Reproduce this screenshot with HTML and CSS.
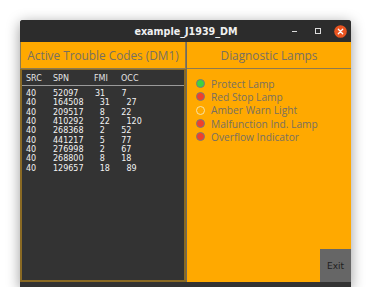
FILE: index.html
```html
<!DOCTYPE html>
<html>
<head>
<meta charset="utf-8">
<link rel="stylesheet" href="styles.css">
</head>
<body>
<div class="window">
  <div class="titlebar">
    <span class="title">example_J1939_DM</span>
    <div class="controls">
      <span class="ctl-min"></span>
      <span class="ctl-max"></span>
      <span class="ctl-close">
        <svg width="13" height="13" viewBox="0 0 13 13"><circle cx="6.5" cy="6.5" r="6.3" fill="#e95420"/><path d="M4.3 4.3 L8.7 8.7 M8.7 4.3 L4.3 8.7" stroke="#fff" stroke-width="1.3" stroke-linecap="round"/></svg>
      </span>
    </div>
  </div>
  <div class="content">
    <div class="left">
      <div class="hdr">Active Trouble Codes (DM1)</div>
      <div class="dtc">
        <div class="thead">
          <span class="c-src">SRC</span><span class="c-spn">SPN</span><span class="c-fmi">FMI</span><span>OCC</span>
        </div>
        <div class="tbody">
          <div class="row"><span class="c-src">40</span><span class="c-spn">52097</span><span class="c-fmi">31</span><span>7</span></div>
          <div class="row sh"><span class="c-src">40</span><span class="c-spn">164508</span><span class="c-fmi">31</span><span class="o2">27</span></div>
          <div class="row sh"><span class="c-src">40</span><span class="c-spn">209517</span><span class="c-fmi">8</span><span>22</span></div>
          <div class="row sh"><span class="c-src">40</span><span class="c-spn">410292</span><span class="c-fmi">22</span><span class="o2">120</span></div>
          <div class="row sh"><span class="c-src">40</span><span class="c-spn">268368</span><span class="c-fmi">2</span><span>52</span></div>
          <div class="row sh"><span class="c-src">40</span><span class="c-spn">441217</span><span class="c-fmi">5</span><span>77</span></div>
          <div class="row sh"><span class="c-src">40</span><span class="c-spn">276998</span><span class="c-fmi">2</span><span>67</span></div>
          <div class="row sh"><span class="c-src">40</span><span class="c-spn">268800</span><span class="c-fmi">8</span><span>18</span></div>
          <div class="row sh"><span class="c-src">40</span><span class="c-spn">129657</span><span class="c-fmi">18</span><span class="o2">89</span></div>
        </div>
      </div>
    </div>
    <div class="right">
      <div class="hdr">Diagnostic Lamps</div>
      <div class="lamps">
        <div class="lamp"><span class="dot green"></span>Protect Lamp</div>
        <div class="lamp"><span class="dot red"></span>Red Stop Lamp</div>
        <div class="lamp"><span class="dot off"></span>Amber Warn Light</div>
        <div class="lamp"><span class="dot red"></span>Malfunction Ind. Lamp</div>
        <div class="lamp"><span class="dot red"></span>Overflow Indicator</div>
      </div>
      <div class="bottom"><button class="exit">Exit</button></div>
    </div>
  </div>
  <div class="footer"></div>
</div>
</body>
</html>
```

FILE: styles.css
```css
html, body {
  margin: 0;
  padding: 0;
  background: #ffffff;
}
body {
  padding: 20px 0 0 20px;
}
.window {
  width: 331px;
  height: 267px;
  display: flex;
  flex-direction: column;
  background: #333333;
  box-shadow: 0 3px 14px rgba(0,0,0,0.4);
  border-radius: 3px 3px 0 0;
  overflow: hidden;
}
.titlebar {
  height: 22px;
  flex: none;
  background: #2c2c2c;
  display: flex;
  align-items: center;
  justify-content: center;
  position: relative;
}
.title {
  font-family: "DejaVu Sans", sans-serif;
  font-weight: bold;
  font-size: 9.6px;
  color: #f0f0f0;
  margin-left: 1px;
}
.controls {
  position: absolute;
  right: 4px;
  top: 0;
  height: 22px;
  display: flex;
  align-items: center;
}
.ctl-min {
  width: 5px;
  height: 1px;
  background: #dcdcdc;
  margin-right: 18px;
  margin-top: 1px;
}
.ctl-max {
  width: 4px;
  height: 4px;
  border: 1px solid #dcdcdc;
  margin-right: 13px;
}
.ctl-close {
  display: flex;
  width: 13px;
  height: 13px;
}
.content {
  flex: 1;
  display: flex;
  min-height: 0;
}
.left {
  width: 166px;
  display: flex;
  flex-direction: column;
  border-right: 1px solid #6e6a60;
}
.right {
  flex: 1;
  display: flex;
  flex-direction: column;
  background: #ffa900;
}
.hdr {
  height: 26px;
  flex: none;
  background: #ffa900;
  border-bottom: 1px solid #8c7a52;
  display: flex;
  align-items: center;
  justify-content: center;
  font-family: "Open Sans", sans-serif;
  font-size: 11.8px;
  color: #787060;
}
.left .hdr {
  border-left: 1px solid #8c7a52;
  border-right: 1px solid #8c7a52;
}
.dtc {
  flex: 1;
  background: #333333;
  border: 2px solid #8a6a24;
  border-top-width: 1px;
  font-family: "DejaVu Sans", sans-serif;
  font-size: 8px;
  color: #f2f2f2;
}
.thead {
  display: flex;
  height: 14px;
  align-items: center;
  padding: 0 0 0 4px;
  margin-top: 1px;
  border-bottom: 1px solid #9a9a9a;
  color: #e4e4e4;
}
.tbody {
  padding: 3px 0 0 4px;
}
.row {
  display: flex;
  height: 9.33px;
  line-height: 9.33px;
}
.c-src { width: 27px; }
.c-spn { width: 41px; }
.c-fmi { width: 27px; }
.row .c-spn { width: 42px; }
.row .c-fmi { width: 26.5px; }
.row.sh .c-fmi { width: 21.5px; padding-left: 4.7px; }
.o2 { padding-left: 5.3px; }
.lamps {
  padding: 8px 0 0 9px;
  display: flex;
  flex-direction: column;
}
.lamp {
  height: 13.33px;
  display: flex;
  align-items: center;
  font-family: "Open Sans", sans-serif;
  font-size: 10.2px;
  color: #787060;
}
.dot {
  width: 7px;
  height: 7px;
  border-radius: 50%;
  border: 1px solid #7a7a7a;
  margin-right: 6px;
}
.green { background: #3fd23f; }
.red { background: #f0402c; }
.off { background: #ffa900; border-color: #f6e3a8; }
.bottom {
  flex: 1;
  display: flex;
  justify-content: flex-end;
  align-items: flex-end;
}
.exit {
  width: 31px;
  height: 33px;
  margin: 0;
  border: none;
  background: #666666;
  font-family: "DejaVu Sans", sans-serif;
  font-size: 9px;
  color: #1e1e1e;
  padding: 0;
}
.footer {
  height: 5px;
  flex: none;
  background: #333333;
}
```
